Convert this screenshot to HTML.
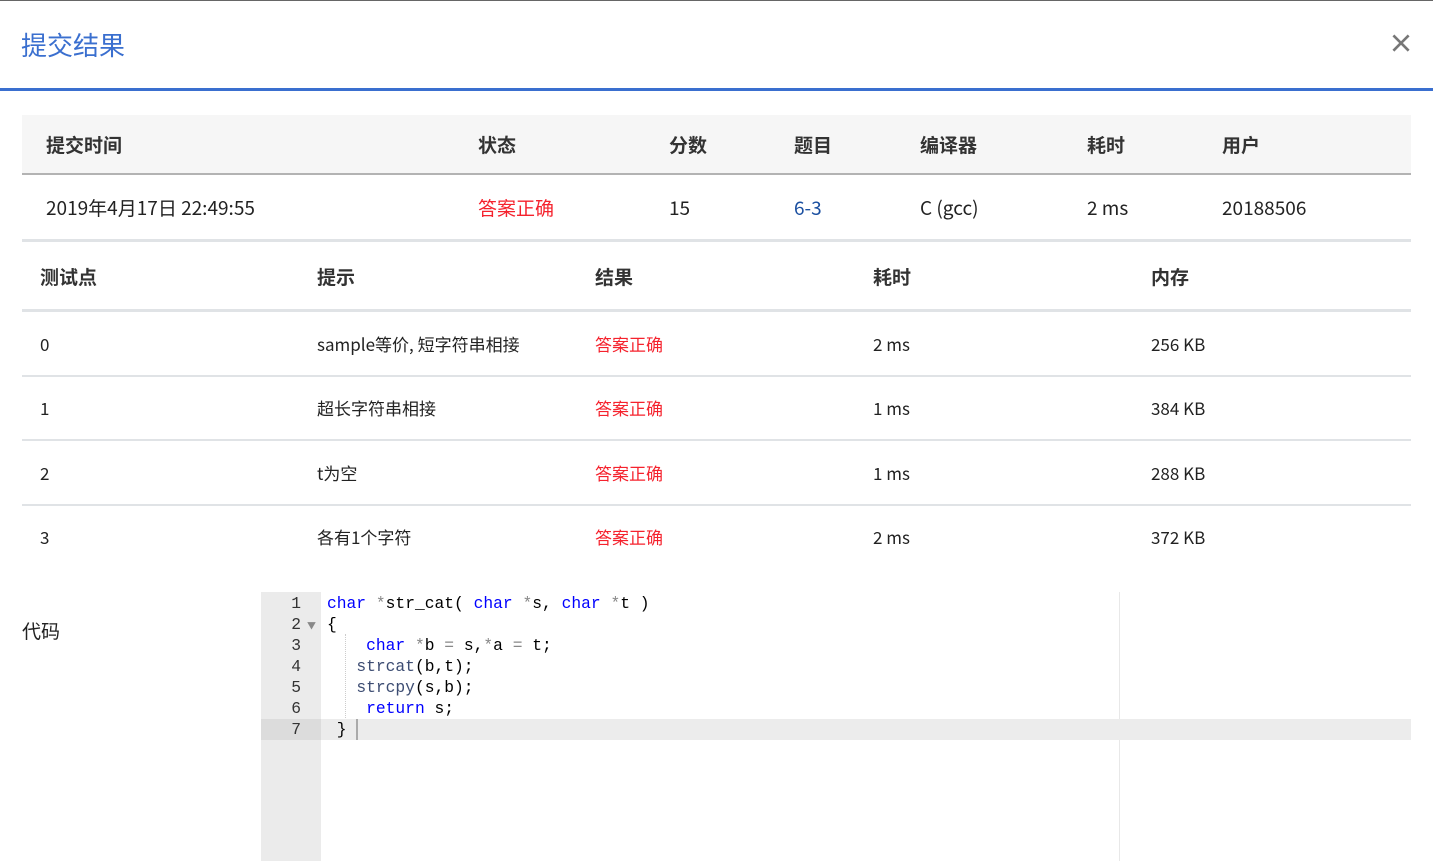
<!DOCTYPE html>
<html><head><meta charset="utf-8"><style>
body{margin:0;width:1433px;height:861px;overflow:hidden;background:#fff;font-family:"Noto Sans CJK SC","Liberation Sans",sans-serif;color:#333;position:relative}
.a{position:absolute;white-space:nowrap;line-height:1}
.h{font-weight:bold;font-size:19px;color:#333}
.t{font-size:19px;color:#222}
.s{font-size:17px;color:#222}
.r{color:#f5222d}
.line{position:absolute;left:22px;width:1389px}
.code{font-family:"Liberation Mono",monospace;font-size:16.3px;line-height:21px}
</style></head><body>
<div class="a" style="left:0;top:0;width:1433px;height:1px;background:#666"></div>
<div class="a" style="left:21px;top:32px;font-size:26px;color:#3a6fcf">提交结果</div>
<div class="a" style="left:1388px;top:30px;font-size:26px;color:#777;font-weight:bold">×</div>
<div class="a" style="left:0;top:88px;width:1433px;height:3px;background:#3a6fcf"></div>

<div class="line" style="top:115px;height:58px;background:#f6f6f6"></div>
<div class="line" style="top:173px;height:2px;background:#b3b3b3"></div>
<div class="a h" style="left:46px;top:135px">提交时间</div>
<div class="a h" style="left:478px;top:135px">状态</div>
<div class="a h" style="left:669px;top:135px">分数</div>
<div class="a h" style="left:794px;top:135px">题目</div>
<div class="a h" style="left:920px;top:135px">编译器</div>
<div class="a h" style="left:1087px;top:135px">耗时</div>
<div class="a h" style="left:1222px;top:135px">用户</div>
<div class="a t" style="left:46px;top:198px">2019年4月17日 22:49:55</div>
<div class="a t r" style="left:478px;top:198px">答案正确</div>
<div class="a t" style="left:669px;top:198px">15</div>
<div class="a t" style="left:794px;top:198px;color:#1a4fa0">6-3</div>
<div class="a t" style="left:920px;top:198px">C (gcc)</div>
<div class="a t" style="left:1087px;top:198px">2 ms</div>
<div class="a t" style="left:1222px;top:198px">20188506</div>
<div class="line" style="top:239px;height:3px;background:#e0e3e6"></div>

<div class="a h" style="left:40px;top:267px">测试点</div>
<div class="a h" style="left:317px;top:267px">提示</div>
<div class="a h" style="left:595px;top:267px">结果</div>
<div class="a h" style="left:873px;top:267px">耗时</div>
<div class="a h" style="left:1151px;top:267px">内存</div>
<div class="line" style="top:309px;height:3px;background:#e0e3e6"></div>

<div class="a s" style="left:40px;top:335px">0</div><div class="a s" style="left:317px;top:335px">sample等价, 短字符串相接</div><div class="a s r" style="left:595px;top:335px">答案正确</div><div class="a s" style="left:873px;top:335px">2 ms</div><div class="a s" style="left:1151px;top:335px">256 KB</div>
<div class="line" style="top:375px;height:2px;background:#e0e3e6"></div>
<div class="a s" style="left:40px;top:399px">1</div><div class="a s" style="left:317px;top:399px">超长字符串相接</div><div class="a s r" style="left:595px;top:399px">答案正确</div><div class="a s" style="left:873px;top:399px">1 ms</div><div class="a s" style="left:1151px;top:399px">384 KB</div>
<div class="line" style="top:439px;height:2px;background:#e0e3e6"></div>
<div class="a s" style="left:40px;top:464px">2</div><div class="a s" style="left:317px;top:464px">t为空</div><div class="a s r" style="left:595px;top:464px">答案正确</div><div class="a s" style="left:873px;top:464px">1 ms</div><div class="a s" style="left:1151px;top:464px">288 KB</div>
<div class="line" style="top:504px;height:2px;background:#e0e3e6"></div>
<div class="a s" style="left:40px;top:528px">3</div><div class="a s" style="left:317px;top:528px">各有1个字符</div><div class="a s r" style="left:595px;top:528px">答案正确</div><div class="a s" style="left:873px;top:528px">2 ms</div><div class="a s" style="left:1151px;top:528px">372 KB</div>

<div class="a" style="left:22px;top:621px;font-size:19px;color:#222">代码</div>
<div class="a" style="left:261px;top:592px;width:60px;height:269px;background:#ebebeb"></div>
<div class="a" style="left:1119px;top:592px;width:1px;height:269px;background:#e8e8e8"></div>
<div class="a" style="left:321px;top:719px;width:1090px;height:21px;background:#ececec"></div>
<div class="a" style="left:261px;top:719px;width:60px;height:21px;background:#dcdcdc"></div>
<div class="a" style="left:356px;top:719px;width:2px;height:21px;background:#aaa"></div>
<div class="a" style="left:345px;top:634px;width:1px;height:84px;border-left:1px dotted #ccc"></div>
<div class="a code" style="left:261px;top:593px;width:40px;text-align:right;color:#333">1<br>2<br>3<br>4<br>5<br>6<br>7</div>
<div class="a" style="left:307px;top:621px;font-size:9px;color:#888">▼</div>
<div class="a code" style="left:327px;top:593px;color:#000;white-space:pre"><span style="color:#00f">char</span> <span style="color:#888">*</span>str_cat( <span style="color:#00f">char</span> <span style="color:#888">*</span>s, <span style="color:#00f">char</span> <span style="color:#888">*</span>t )
{
    <span style="color:#00f">char</span> <span style="color:#888">*</span>b <span style="color:#888">=</span> s,<span style="color:#888">*</span>a <span style="color:#888">=</span> t;
   <span style="color:#3c4c72">strcat</span>(b,t);
   <span style="color:#3c4c72">strcpy</span>(s,b);
    <span style="color:#00f">return</span> s;
 }</div>
</body></html>
